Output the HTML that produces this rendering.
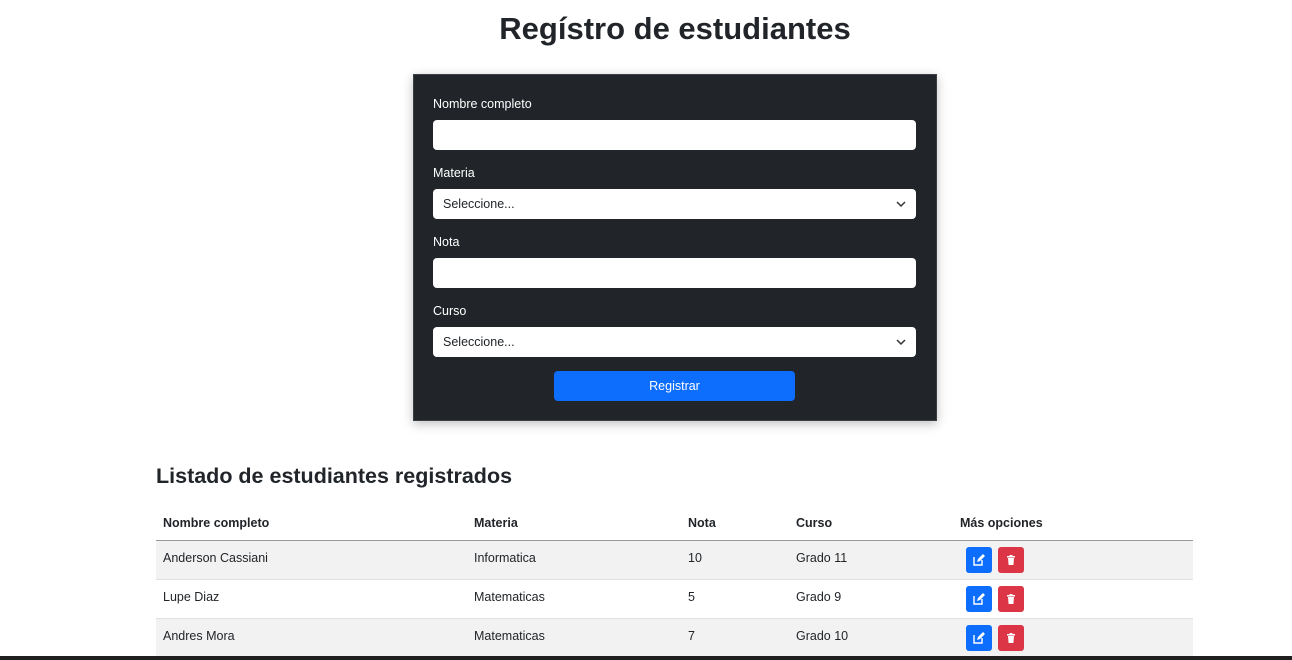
<!DOCTYPE html>
<html><head><meta charset="utf-8"><style>
*{box-sizing:border-box;margin:0;padding:0}
body{width:1292px;height:660px;overflow:hidden;background:#fff;font-family:"Liberation Sans",sans-serif;color:#212529;position:relative}
h1{position:absolute;top:11px;left:0;width:1350px;text-align:center;font-size:31px;font-weight:bold}
.card{position:absolute;left:413px;top:74px;width:524px;height:347px;background:#212529;border:1px solid #3a3f44;box-shadow:0 3px 10px rgba(0,0,0,.25)}
.lbl{position:absolute;left:19px;color:#fff;font-size:12.5px}
.inp{position:absolute;left:19px;width:483px;height:30px;background:#fff;border-radius:4px;font-size:12.5px;padding:8px 10px;color:#212529}
.inp svg{position:absolute;right:10px;top:11px}
.btn{position:absolute;left:140px;top:296px;width:241px;height:30px;background:#0d6efd;border-radius:4px;color:#fff;font-size:12.5px;text-align:center;line-height:31px}
h2{position:absolute;left:156px;top:464px;font-size:21.5px;font-weight:bold}
table{position:absolute;left:156px;top:507px;width:1037px;border-collapse:collapse;font-size:12.5px}
td,th{text-align:left;padding:0 7px;height:39px}
td{padding-bottom:3px}
th{height:33px;font-weight:bold;border-bottom:1px solid #999}
tr.s td{background:#f2f2f2}
tr td{border-bottom:1px solid #dee2e6}
.ic{display:inline-block;width:26px;height:26px;border-radius:3px;vertical-align:middle;margin-left:6px;position:relative;margin-top:3px}
.b{background:#0d6efd}.r{background:#dc3545}
.ic svg{position:absolute;left:7px;top:7px}
.bar{position:absolute;left:0;top:656px;width:1292px;height:4px;background:#1f1f1f}
</style></head><body>
<h1>Regístro de estudiantes</h1>
<div class="card">
<div class="lbl" style="top:22px">Nombre completo</div>
<div class="inp" style="top:45px"></div>
<div class="lbl" style="top:91px">Materia</div>
<div class="inp" style="top:114px">Seleccione...<svg width="10" height="8" viewBox="0 0 10 8"><path d="M1 2l4 4 4-4" stroke="#333" stroke-width="1.5" fill="none"/></svg></div>
<div class="lbl" style="top:160px">Nota</div>
<div class="inp" style="top:183px"></div>
<div class="lbl" style="top:229px">Curso</div>
<div class="inp" style="top:252px">Seleccione...<svg width="10" height="8" viewBox="0 0 10 8"><path d="M1 2l4 4 4-4" stroke="#333" stroke-width="1.5" fill="none"/></svg></div>
<div class="btn">Registrar</div>
</div>
<h2>Listado de estudiantes registrados</h2>
<table>
<tr><th style="width:311px">Nombre completo</th><th style="width:214px">Materia</th><th style="width:108px">Nota</th><th style="width:164px">Curso</th><th>Más opciones</th></tr>
<tr class="s"><td>Anderson Cassiani</td><td>Informatica</td><td>10</td><td>Grado 11</td><td>E</td></tr>
<tr><td>Lupe Diaz</td><td>Matematicas</td><td>5</td><td>Grado 9</td><td>E</td></tr>
<tr class="s"><td>Andres Mora</td><td>Matematicas</td><td>7</td><td>Grado 10</td><td>E</td></tr>
</table>
<div class="bar"></div>
<script>
document.querySelectorAll('td:last-child').forEach(function(td){if(td.textContent==='E')td.innerHTML='<span class="ic b"><svg width="12" height="12" viewBox="0 0 12 12"><path d="M1 3v8h8V6" stroke="#fff" stroke-width="1.4" fill="none"/><path d="M4 8l1-3 5-5 2 2-5 5z" fill="#fff"/></svg></span><span class="ic r"><svg width="12" height="12" viewBox="0 0 12 12"><path d="M2 2h8v1.5H2zM4.5 1h3v1h-3zM3 4h6l-.6 7H3.6z" fill="#fff"/></svg></span>';});
</script>
</body></html>
